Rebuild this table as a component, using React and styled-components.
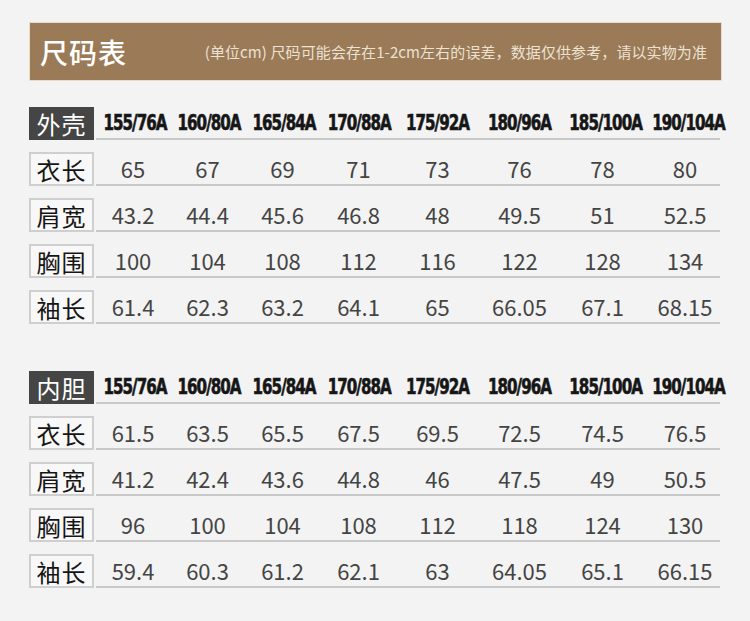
import React from "react";
import styled, { createGlobalStyle } from "styled-components";

const GlobalStyle = createGlobalStyle`
  body {
    margin: 0;
    background: #f3f3f3;
    font-family: "Noto Sans CJK SC", "Noto Sans", sans-serif;
  }
`;

const Page = styled.div`
  width: 693px;
  padding: 22px 0 0 29px;
`;

const TitleBar = styled.div`
  display: flex;
  align-items: center;
  justify-content: space-between;
  background: #9a7a57;
  border: 1px solid #e9dccb;
  padding: 0 14px 0 10px;
  box-sizing: border-box;
  height: 59px;
`;

const Title = styled.h1`
  margin: 0;
  font-size: 28px;
  font-weight: 500;
  color: #ffffff;
  letter-spacing: 1px;
`;

const Note = styled.span`
  font-size: 15px;
  color: #ece2d3;
  letter-spacing: 0.1px;
`;

const Table = styled.div`
  display: grid;
  grid-template-columns: 65px 74px 75px 75px 77px 81px 83px 83px 82px;
  row-gap: 12px;
  margin-top: ${(p) => p.$top}px;
  align-items: center;
`;

const Row = styled.div`
  display: contents;
`;

const Label = styled.div`
  grid-column: 1;
  height: ${(p) => (p.$dark ? 33 : 34)}px;
  box-sizing: border-box;
  display: flex;
  align-items: center;
  justify-content: center;
  font-size: 24px;
  letter-spacing: 1px;
  background: ${(p) => (p.$dark ? "#454545" : "#f8f8f8")};
  color: ${(p) => (p.$dark ? "#ffffff" : "#151515")};
  border: ${(p) => (p.$dark ? "none" : "2px solid #cfcfcf")};
`;

const Cells = styled.div`
  grid-column: 2 / -1;
  display: grid;
  grid-template-columns: 74px 75px 75px 77px 81px 83px 83px 82px;
  align-self: stretch;
  align-items: center;
  margin-left: 2px;
  margin-right: 4px;
  border-bottom: 2px solid #c9c9c9;
`;

const Cell = styled.div`
  text-align: center;
  font-size: 22px;
  color: #444444;
`;

const Size = styled.div`
  text-align: center;
  font-family: "DejaVu Sans Condensed", "DejaVu Sans", sans-serif;
  font-weight: 900;
  font-size: 21px;
  letter-spacing: -1.2px;
  color: #161616;
  white-space: nowrap;
  transform: scaleX(0.8);
  -webkit-text-stroke: 0.6px #161616;
`;

const sizes = [
  "155/76A",
  "160/80A",
  "165/84A",
  "170/88A",
  "175/92A",
  "180/96A",
  "185/100A",
  "190/104A",
];

const tables = [
  {
    name: "外壳",
    top: 26,
    rows: [
      ["衣长", ["65", "67", "69", "71", "73", "76", "78", "80"]],
      ["肩宽", ["43.2", "44.4", "45.6", "46.8", "48", "49.5", "51", "52.5"]],
      ["胸围", ["100", "104", "108", "112", "116", "122", "128", "134"]],
      ["袖长", ["61.4", "62.3", "63.2", "64.1", "65", "66.05", "67.1", "68.15"]],
    ],
  },
  {
    name: "内胆",
    top: 47,
    rows: [
      ["衣长", ["61.5", "63.5", "65.5", "67.5", "69.5", "72.5", "74.5", "76.5"]],
      ["肩宽", ["41.2", "42.4", "43.6", "44.8", "46", "47.5", "49", "50.5"]],
      ["胸围", ["96", "100", "104", "108", "112", "118", "124", "130"]],
      ["袖长", ["59.4", "60.3", "61.2", "62.1", "63", "64.05", "65.1", "66.15"]],
    ],
  },
];

export default function App() {
  return (
    <>
      <GlobalStyle />
      <Page>
        <TitleBar>
          <Title>尺码表</Title>
          <Note>(单位cm) 尺码可能会存在1-2cm左右的误差，数据仅供参考，请以实物为准</Note>
        </TitleBar>
        {tables.map((t) => (
          <Table key={t.name} $top={t.top}>
            <Row>
              <Label $dark>{t.name}</Label>
              <Cells>
                {sizes.map((s) => (
                  <Size key={s}>{s}</Size>
                ))}
              </Cells>
            </Row>
            {t.rows.map(([label, values]) => (
              <Row key={label}>
                <Label>{label}</Label>
                <Cells>
                  {values.map((v, i) => (
                    <Cell key={i}>{v}</Cell>
                  ))}
                </Cells>
              </Row>
            ))}
          </Table>
        ))}
      </Page>
    </>
  );
}
